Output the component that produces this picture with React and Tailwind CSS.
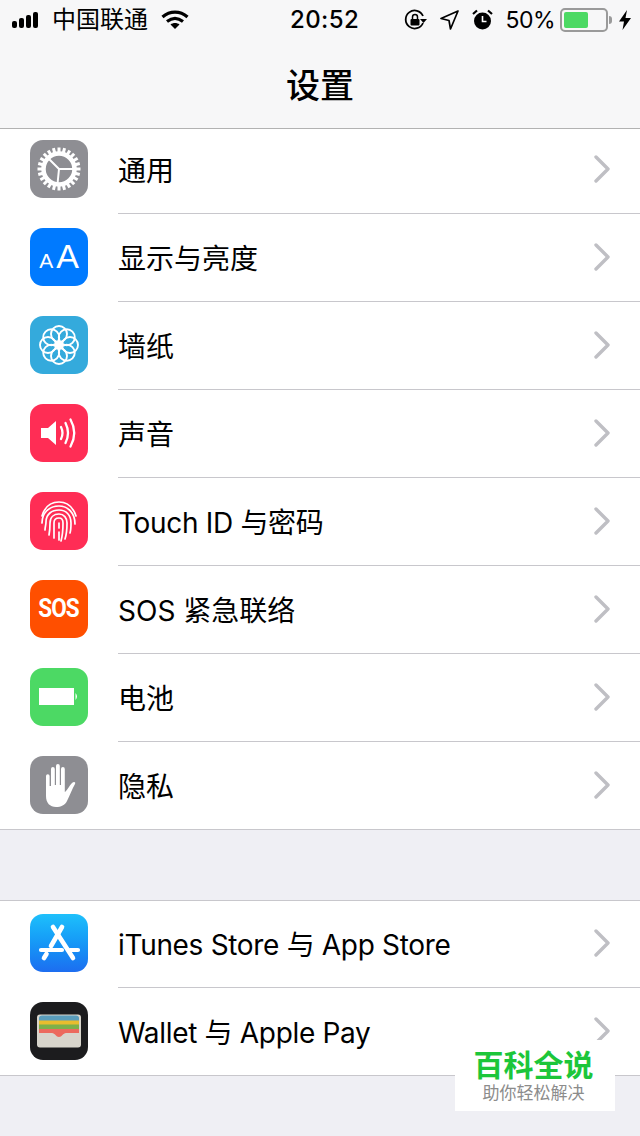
import { useState } from 'react';

const cjk = "font-['Inter','Noto_Sans_CJK_SC',sans-serif]";

function Tile({ className, children }) {
  return (
    <div className={`self-start mt-[14px] w-[58px] h-[58px] rounded-[13px] flex items-center justify-center shrink-0 overflow-hidden ${className}`}>
      {children}
    </div>
  );
}

function GearIcon() {
  const teeth = Array.from({ length: 24 }, (_, i) => i * 15);
  return (
    <svg width="46" height="46" viewBox="0 0 46 46">
      {teeth.map((a) => (
        <rect key={a} x="21.5" y="1.5" width="3" height="6" fill="#fff" transform={`rotate(${a} 23 23)`} />
      ))}
      <circle cx="23" cy="23" r="15.5" fill="none" stroke="#fff" strokeWidth="4.5" />
      <path d="M23 23 L13 13 M23 23 L38 23 M23 23 L21.5 38" stroke="#fff" strokeWidth="2" />
    </svg>
  );
}

function FlowerIcon() {
  const petals = Array.from({ length: 8 }, (_, i) => i * 45);
  return (
    <svg width="42" height="42" viewBox="0 0 42 42" fill="none" stroke="#fff" strokeWidth="1.9">
      {petals.map((a) => (
        <circle key={a} cx="21" cy="10" r="8" transform={`rotate(${a} 21 21)`} />
      ))}
      <circle cx="21" cy="21" r="3" fill="#fff" stroke="none" />
    </svg>
  );
}

function SoundIcon() {
  return (
    <svg className="ml-[2px]" width="40" height="32" viewBox="0 0 40 32" fill="none">
      <path d="M1 11 H8 L16 4 V28 L8 21 H1 Z" fill="#fff" />
      <path d="M21 10 Q24 16 21 22" stroke="#fff" strokeWidth="2.3" strokeLinecap="round" />
      <path d="M25.5 6 Q30.5 16 25.5 26" stroke="#fff" strokeWidth="2.3" strokeLinecap="round" />
      <path d="M30.5 2.5 Q38 16 30.5 29.5" stroke="#fff" strokeWidth="2.3" strokeLinecap="round" />
    </svg>
  );
}

function FingerprintIcon() {
  return (
    <svg width="40" height="44" viewBox="0 0 40 44" fill="none" stroke="#fff" strokeWidth="1.7" strokeLinecap="round">
      <path d="M3 17 C6 7 13 3 20 3 C28 3 34 8 37 17" />
      <path d="M3 24 C3 14 10 7 20 7 C29 7 36 14 36 25" />
      <path d="M6 31 C6 28 7 26 7 23 C7 15 13 11 20 11 C27 11 32 16 32 24 C32 28 32 31 31 34" />
      <path d="M10 36 C11 31 11 27 11 24 C11 18 15 15 20 15 C25 15 28 19 28 24 C28 29 28 34 26 40" />
      <path d="M15 39 C15 33 15 28 15 24 C15 21 17 19 20 19 C23 19 24 21 24 24 C24 30 24 35 22 42" />
      <path d="M20 24 V29 M20 33 V41" />
    </svg>
  );
}

function BatteryIcon() {
  return (
    <svg width="40" height="20" viewBox="0 0 40 20">
      <rect x="0" y="1" width="35" height="17" fill="#fff" />
      <path d="M36.5 6 Q39.5 9.5 36.5 13 Z" fill="#fff" />
    </svg>
  );
}

function HandIcon() {
  return (
    <svg width="36" height="46" viewBox="0 0 36 46" fill="#fff">
      <path d="M5 14 a1.8 1.8 0 0 1 3.6 0 V24 H10 V7 a1.9 1.9 0 0 1 3.8 0 V23 H15 V4 a1.9 1.9 0 0 1 3.8 0 V23 H20 V7 a1.9 1.9 0 0 1 3.8 0 V30 C26 29 28 24 31 21 C33 19 35 20 34 22 C31 27 29 33 26 39 C24 43 20 45 15 45 C9 45 5 41 5 34 Z" />
    </svg>
  );
}

function AppStoreIcon() {
  return (
    <svg width="44" height="42" viewBox="0 0 44 42" fill="none" stroke="#fff" strokeWidth="4.6" strokeLinecap="round">
      <path d="M25 5 L14 24" />
      <path d="M9.5 32 L7 36" />
      <path d="M16 5 L36 36" />
      <path d="M4 28 H25 M33 28 H41" strokeWidth="4.2" />
    </svg>
  );
}

function WalletIcon() {
  return (
    <svg width="46" height="38" viewBox="0 0 46 38">
      <rect x="1" y="2.5" width="44" height="33" rx="3" fill="#d8d5cc" />
      <path d="M3 6 Q3 3.5 6 3.5 H40 Q43 3.5 43 6 V9 H3 Z" fill="#5a9dbb" />
      <rect x="3" y="8.5" width="40" height="4.5" fill="#e8bd2e" />
      <rect x="3" y="12.5" width="40" height="5" fill="#7db04a" />
      <path d="M3 17 H43 V21 H30 C27 21 26 25 23 25 C20 25 19 21 16 21 H3 Z" fill="#ec6a5e" />
    </svg>
  );
}

const mainRows = [
  { label: '通用', tile: 'bg-[#8e8e93]', icon: <GearIcon /> },
  { label: '显示与亮度', tile: 'bg-[#007aff]', icon: (
    <div className="flex items-baseline gap-[3px] pb-[2px] text-white font-['Liberation_Sans',sans-serif] leading-none">
      <span className="text-[21px]">A</span><span className="text-[34px]">A</span>
    </div>
  ) },
  { label: '墙纸', tile: 'bg-[#34aadc]', icon: <FlowerIcon /> },
  { label: '声音', tile: 'bg-[#ff2d55]', icon: <SoundIcon /> },
  { label: 'Touch ID 与密码', tight: true, tile: 'bg-[#ff2d55]', icon: <FingerprintIcon /> },
  { label: 'SOS 紧急联络', tile: 'bg-[#ff4f00]', icon: (
    <span className="text-white font-bold text-[25px] tracking-[-1px] scale-x-90 font-['Roboto',sans-serif]">SOS</span>
  ) },
  { label: '电池', tile: 'bg-[#4cd964]', icon: <BatteryIcon /> },
  { label: '隐私', tile: 'bg-[#8e8e93]', icon: <HandIcon /> },
];

const storeRows = [
  { label: 'iTunes Store 与 App Store', tight: true, tile: 'bg-gradient-to-b from-[#1fc0fb] to-[#1d6df0]', icon: <AppStoreIcon /> },
  { label: 'Wallet 与 Apple Pay', tight: true, tile: 'bg-[#1c1c1e]', icon: <WalletIcon /> },
];

function Row({ row, last }) {
  return (
    <div className={`flex h-[88px] pl-[30px] ${last ? 'border-b border-[#c8c7cc]' : ''}`}>
      <Tile className={row.tile}>{row.icon}</Tile>
      <div className={`flex-1 ml-[30px] flex items-center justify-between pr-[29px] ${last ? '' : 'border-b border-[#c8c7cc]'}`}>
        <span className={`pt-[3px] text-[28px] text-black ${row.tight ? 'tracking-[-0.32px]' : ''}`}>{row.label}</span>
        <svg className="mb-[2px]" width="18" height="28" viewBox="0 0 18 28" fill="none" stroke="#bfbfc4" strokeWidth="3.4" strokeLinecap="round" strokeLinejoin="round">
          <path d="M3 2 L15 14 L3 26" />
        </svg>
      </div>
    </div>
  );
}

function StatusBar() {
  return (
    <div className="flex items-center h-[40px] pl-3 pr-[9px] text-black">
      <div className="w-[278px] flex items-center">
        <div className="flex items-end gap-[2px] h-[16px]">
          <i className="w-[5px] h-[7px] rounded-[2px] bg-black" />
          <i className="w-[5px] h-[10px] rounded-[2px] bg-black" />
          <i className="w-[5px] h-[13px] rounded-[2px] bg-black" />
          <i className="w-[5px] h-[16px] rounded-[2px] bg-black" />
        </div>
        <span className="ml-[14px] text-[24px] leading-none">中国联通</span>
        <svg className="ml-[13px]" width="28" height="20" viewBox="0 0 28 20" fill="none" stroke="#000" strokeWidth="3.2">
          <path d="M1.5 7 C9 0.5 19 0.5 26.5 7" />
          <path d="M6 11.5 C11 7.5 17 7.5 22 11.5" />
          <path d="M14 19 L9.5 14.5 C12 12.5 16 12.5 18.5 14.5 Z" fill="#000" stroke="none" />
        </svg>
      </div>
      <span className="text-[24px] font-medium leading-none tracking-[0.4px]">20:52</span>
      <div className="flex-1 flex items-center justify-end">
        <svg width="23" height="22" viewBox="0 0 23 22" fill="none">
          <path d="M19 14 A9 9 0 1 1 19 7" stroke="#000" strokeWidth="1.8" />
          <path d="M16 10 H23 L19.5 14 Z" fill="#000" />
          <rect x="6.5" y="10" width="9" height="6.5" rx="1" fill="#000" />
          <path d="M8.5 10 V8 a2.5 2.5 0 0 1 5 0 V10" stroke="#000" strokeWidth="1.5" />
        </svg>
        <svg className="ml-[12px]" width="20" height="22" viewBox="0 0 20 22" fill="none">
          <path d="M19 2 L2 9.5 L10 11.5 L11.5 20 Z" stroke="#000" strokeWidth="1.7" strokeLinejoin="round" />
        </svg>
        <svg className="ml-[13px]" width="21" height="22" viewBox="0 0 21 22">
          <circle cx="10.5" cy="12" r="8.5" fill="#000" />
          <path d="M10.5 7 V12.5 H14.5" stroke="#fff" strokeWidth="1.6" fill="none" />
          <path d="M1 5 L5 1.5 M20 5 L16 1.5" stroke="#000" strokeWidth="2.2" />
        </svg>
        <span className="ml-[12px] text-[23px] tracking-[-0.5px] leading-none">50%</span>
        <div className="ml-[5px] w-[48px] h-[24px] rounded-[5px] border-2 border-[#9a9a9a] p-[2px]">
          <div className="w-[24px] h-full rounded-[2px] bg-[#4cd964]" />
        </div>
        <i className="ml-[1px] w-[3px] h-[8px] rounded-r-[3px] bg-[#9a9a9a]" />
        <svg className="ml-[7px]" width="12" height="20" viewBox="0 0 12 20">
          <path d="M8 0 L0 11.5 H5 L3.5 20 L12 8 H6.5 Z" fill="#000" />
        </svg>
      </div>
    </div>
  );
}

export default function App() {
  const [rows] = useState(mainRows);

  return (
    <div className={`relative w-[640px] h-[1136px] overflow-hidden flex flex-col bg-[#efeff4] ${cjk}`}>
      <div className="relative z-10 h-[129px] shrink-0 bg-[#f7f7f8] border-b border-[#b2b2b2]">
        <StatusBar />
        <div className="h-[88px] flex items-center justify-center pt-[3px] text-[34px] font-medium text-black leading-none">设置</div>
      </div>
      <div className="-mt-[3px] bg-white">
        {rows.map((row, i) => (
          <Row key={row.label} row={row} last={i === rows.length - 1} />
        ))}
      </div>
      <div className="mt-[70px] bg-white shadow-[inset_0_1px_0_#c8c7cc]">
        {storeRows.map((row, i) => (
          <Row key={row.label} row={row} last={i === storeRows.length - 1} />
        ))}
      </div>
      <div className="absolute left-[455px] top-[1040px] z-20 w-[160px] h-[71px] bg-white flex flex-col items-center pt-[7px] pr-[3px]">
        <span className="text-[30px] leading-[36px] font-bold text-[#1cc63a]">百科全说</span>
        <span className="text-[17px] leading-[21px] text-[#8c8c8c]">助你轻松解决</span>
      </div>
    </div>
  );
}
